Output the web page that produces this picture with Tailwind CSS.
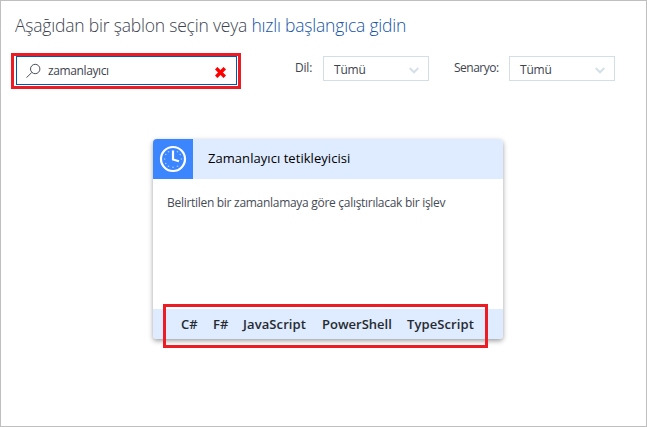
<!DOCTYPE html>
<html lang="tr">
<head>
<meta charset="utf-8">
<title>Şablonlar</title>
<script src="https://cdn.jsdelivr.net/npm/@tailwindcss/browser@4"></script>
</head>
<body class="bg-white">
<main class="relative flex h-[427px] w-[647px] flex-col overflow-hidden border border-[#bfbfbf] whitespace-nowrap text-[#3d4450] font-['Open_Sans','Noto_Sans',sans-serif]">
  <h1 class="mt-[11px] ml-[14px] h-[27px] text-[17.5px] leading-[26px] font-light tracking-[-0.2px]">Aşağıdan bir şablon seçin veya <a class="text-[#1654a8]">hızlı başlangıca gidin</a></h1>

  <div class="mt-[17px] ml-[15px] flex h-[30px] items-start">
    <div class="flex h-[29px] w-[221px] items-center border border-[#0058ad] pl-[9px]">
      <svg class="h-[16px] w-[16px]" viewBox="0 0 16 16" fill="none" stroke="#4a5058" stroke-width="1"><circle cx="9.2" cy="6" r="4.7"/><path d="M5.8 9.4L.5 14.7"/></svg>
      <span class="ml-[6px] w-[167px] pt-[1px] text-[12px] tracking-[-0.38px]">zamanlayıcı</span>
      <svg class="mt-[3px] h-[11px] w-[11px]" viewBox="0 0 11 11" fill="none" stroke="#f00" stroke-width="3.5"><path d="M1.2 1.2L9.8 9.8M9.8 1.2L1.2 9.8"/></svg>
    </div>
    <span class="ml-[58px] w-[28px] text-[12px] leading-[24px] tracking-[-0.2px]">Dil:</span>
    <div class="flex h-[25px] w-[106px] items-center justify-between border border-[#d3dee6] pr-[9px] pl-[10px]">
      <span class="pt-[2px] text-[12px] tracking-[-0.2px]">Tümü</span>
      <svg class="mt-[3px] h-[7px] w-[10px]" viewBox="0 0 10 7" fill="none" stroke="#d5e0e8" stroke-width="2"><path d="M.7 1L5 5.3 9.3 1"/></svg>
    </div>
    <span class="ml-[25px] w-[55px] text-[12px] leading-[24px] tracking-[-0.5px]">Senaryo:</span>
    <div class="flex h-[25px] w-[106px] items-center justify-between border border-[#d3dee6] pr-[9px] pl-[10px]">
      <span class="pt-[2px] text-[12px] tracking-[-0.2px]">Tümü</span>
      <svg class="mt-[3px] h-[7px] w-[10px]" viewBox="0 0 10 7" fill="none" stroke="#d5e0e8" stroke-width="2"><path d="M.7 1L5 5.3 9.3 1"/></svg>
    </div>
  </div>

  <section class="mt-[53px] ml-[152px] flex h-[200px] w-[350px] flex-col overflow-hidden rounded-[4px] bg-white shadow-[0_2px_5px_rgba(0,0,0,0.38)]">
    <header class="flex h-[40px] shrink-0 items-center bg-[#dfebfe]">
      <div class="flex size-[40px] items-center justify-center bg-[#3b86ff]">
        <svg class="size-[28px]" viewBox="0 0 28 28" fill="none" stroke="#fff"><circle cx="14" cy="14" r="12" stroke-width="2.2"/><path d="M14 5.5V14.5L20 16.2" stroke-width="2.2"/><g fill="#a9caff" stroke="none"><circle cx="5.6" cy="14" r=".8"/><circle cx="22.4" cy="14" r=".8"/><circle cx="14" cy="22.3" r=".8"/><circle cx="9.5" cy="6.8" r=".8"/><circle cx="18.5" cy="6.8" r=".8"/><circle cx="6.8" cy="9.5" r=".8"/><circle cx="21.2" cy="9.5" r=".8"/><circle cx="6.8" cy="18.5" r=".8"/><circle cx="9.5" cy="21.2" r=".8"/><circle cx="18.5" cy="21.2" r=".8"/></g></svg>
      </div>
      <h2 class="ml-[15px] text-[13px] tracking-[0.05px] text-black">Zamanlayıcı tetikleyicisi</h2>
    </header>
    <p class="h-[130px] pt-[15px] pl-[14px] text-[12px] leading-[18px] tracking-[-0.29px] text-[#454b55]">Belirtilen bir zamanlamaya göre çalıştırılacak bir işlev</p>
    <footer class="flex h-[30px] items-center bg-[#dfebfe] pt-[2px] pl-[28px] text-[13px] font-semibold tracking-[0.1px] text-[#252a31]">
      <span class="w-[32px]">C#</span><span class="w-[30px]">F#</span><span class="w-[79px]">JavaScript</span><span class="w-[85px] tracking-normal">PowerShell</span><span>TypeScript</span>
    </footer>
  </section>

  <div class="absolute top-[52px] left-[10px] h-[36px] w-[230px] border-3 border-[#ed1c24]"></div>
  <div class="absolute top-[303px] left-[162px] h-[44px] w-[325px] border-3 border-[#ed1c24]"></div>
</main>
</body>
</html>
